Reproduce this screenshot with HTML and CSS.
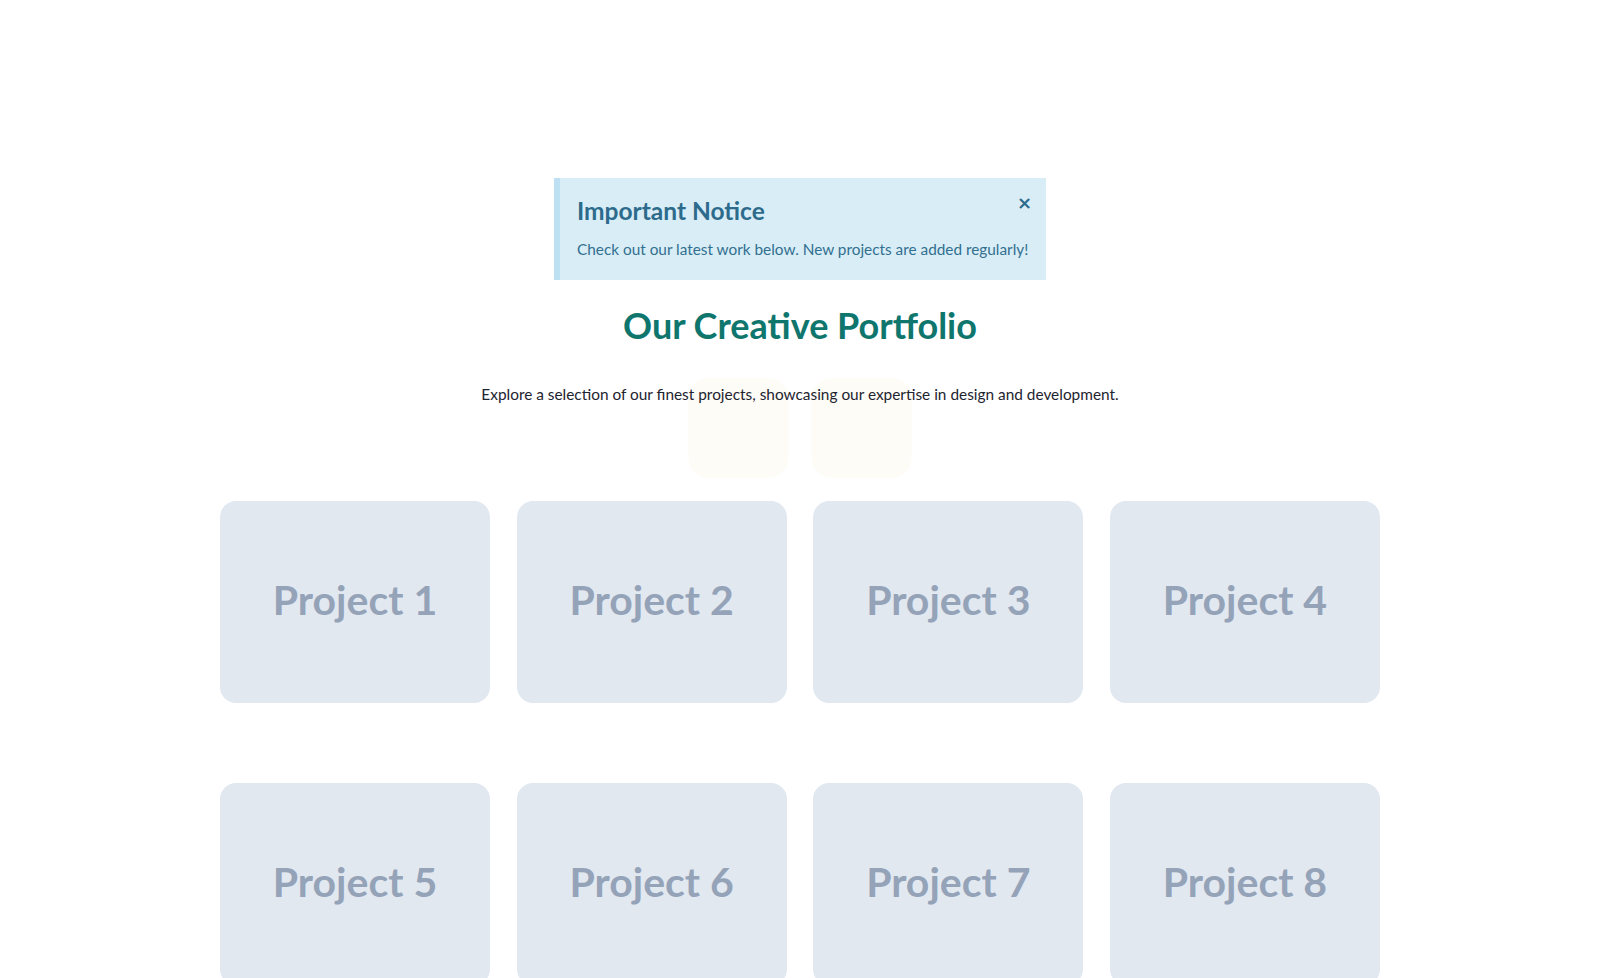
FILE: index.html
```html
<!DOCTYPE html>
<html lang="en">
<head>
<meta charset="utf-8">
<title>Our Creative Portfolio</title>
<link rel="stylesheet" href="styles.css">
</head>
<body>
<main class="page">
  <div class="notice" role="alert">
    <button class="notice-close" aria-label="Close">&times;</button>
    <h2 class="notice-title">Important Notice</h2>
    <p class="notice-text">Check out our latest work below. New projects are added regularly!</p>
  </div>

  <h1 class="title">Our Creative Portfolio</h1>

  <div class="intro">
    <div class="shapes" aria-hidden="true">
      <span class="shape"></span>
      <span class="shape"></span>
    </div>
    <p class="lead">Explore a selection of our finest projects, showcasing our expertise in design and development.</p>
  </div>

  <section class="grid">
    <div class="card">Project 1</div>
    <div class="card">Project 2</div>
    <div class="card">Project 3</div>
    <div class="card">Project 4</div>
    <div class="card">Project 5</div>
    <div class="card">Project 6</div>
    <div class="card">Project 7</div>
    <div class="card">Project 8</div>
  </section>
</main>
</body>
</html>
```

FILE: styles.css
```css
* { box-sizing: border-box; }

html, body {
  margin: 0;
  padding: 0;
  background: #ffffff;
}

body {
  font-family: "Lato", "Noto Sans", sans-serif;
  color: #1f2937;
  overflow: hidden;
}

.page {
  width: 1160px;
  margin: 0 auto;
  padding-top: 178px;
  display: flex;
  flex-direction: column;
  align-items: center;
}

.notice {
  position: relative;
  width: 492px;
  height: 102px;
  background: #d9edf7;
  border-left: 6px solid #bde0f2;
  padding: 18px 16px 0 17px;
  color: #31708f;
}

.notice-title {
  margin: 0;
  font-size: 24.5px;
  line-height: 30px;
  font-weight: 700;
  color: #2d6b8c;
}

.notice-text {
  margin: 12px 0 0;
  font-size: 15.35px;
  line-height: 22px;
  color: #31708f;
}

.notice-close {
  position: absolute;
  top: 16px;
  right: 14px;
  padding: 0;
  border: 0;
  background: none;
  font-family: "DejaVu Sans", sans-serif;
  font-size: 18px;
  line-height: 1;
  font-weight: 700;
  color: #2d6b8c;
  cursor: pointer;
}

.title {
  margin: 24px 0 0;
  font-size: 36px;
  line-height: 43px;
  font-weight: 700;
  color: #0f766e;
}

.intro {
  position: relative;
  margin-top: 35px;
  width: 100%;
  display: flex;
  justify-content: center;
}

.shapes {
  position: absolute;
  top: -4px;
  left: 50%;
  transform: translateX(-50%);
  display: flex;
  gap: 23px;
  z-index: 0;
}

.shape {
  width: 100px;
  height: 100px;
  border-radius: 20px;
  background: #fdfcf6;
}

.lead {
  position: relative;
  z-index: 1;
  margin: 0;
  font-size: 15.4px;
  line-height: 24px;
  color: #1e2430;
}

.grid {
  margin-top: 95px;
  width: 1160px;
  display: grid;
  grid-template-columns: repeat(4, 270px);
  column-gap: 26.66px;
  row-gap: 80px;
}

.card {
  height: 202px;
  padding-bottom: 6px;
  border-radius: 16px;
  background: #e2e8f0;
  color: #94a3b8;
  font-family: "Lato", sans-serif;
  font-weight: 700;
  font-size: 41px;
  display: flex;
  align-items: center;
  justify-content: center;
}
```
